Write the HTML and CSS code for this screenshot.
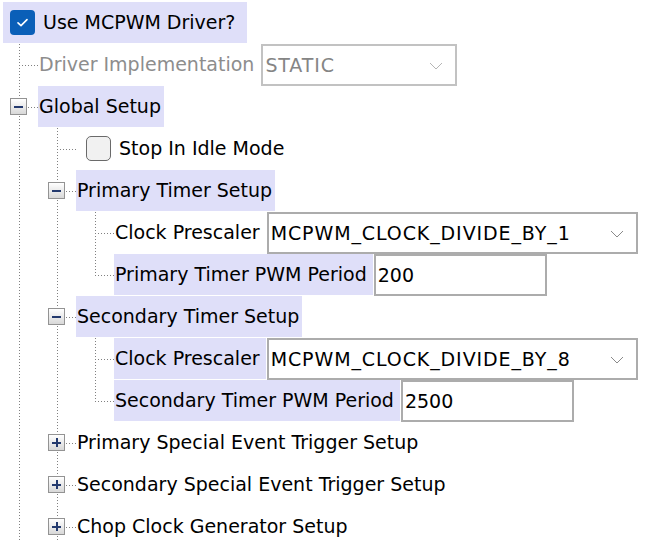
FILE: index.html
```html
<!DOCTYPE html>
<html>
<head>
<meta charset="utf-8">
<link rel="stylesheet" href="styles.css">
</head>
<body>
<div class="tree">
  <div class="row">
    <span class="lbl root sel"><span class="cb on"><svg viewBox="0 0 25 25" width="25" height="25"><polyline points="8,12.8 11,15.6 17,9.6" fill="none" stroke="#fff" stroke-width="1.6" stroke-linecap="round" stroke-linejoin="round"/></svg></span>Use MCPWM Driver?</span>
  </div>
  <div class="row">
    <span class="g tee"></span>
    <span class="lbl dis ctl">Driver Implementation</span>
    <span class="combo dis w-static"><span class="val">STATIC</span><svg class="chev" viewBox="0 0 14 8" width="14" height="8"><polyline points="1,1 7,7 13,1" fill="none" stroke="#b5b5b5" stroke-width="1"/></svg></span>
  </div>
  <div class="row">
    <span class="g tee"><span class="exp minus"></span></span>
    <span class="lbl sel">Global Setup</span>
  </div>
  <div class="row">
    <span class="g pipe"></span>
    <span class="g tee"></span>
    <span class="cb off"></span>
    <span class="lbl">Stop In Idle Mode</span>
  </div>
  <div class="row">
    <span class="g pipe"></span>
    <span class="g tee"><span class="exp minus"></span></span>
    <span class="lbl sel">Primary Timer Setup</span>
  </div>
  <div class="row">
    <span class="g pipe"></span>
    <span class="g pipe"></span>
    <span class="g tee"></span>
    <span class="lbl ctl">Clock Prescaler</span>
    <span class="combo w-clock"><span class="val">MCPWM_CLOCK_DIVIDE_BY_1</span><svg class="chev" viewBox="0 0 14 8" width="14" height="8"><polyline points="1,1 7,7 13,1" fill="none" stroke="#8a8a8a" stroke-width="1"/></svg></span>
  </div>
  <div class="row">
    <span class="g pipe"></span>
    <span class="g pipe"></span>
    <span class="g ell"></span>
    <span class="lbl ctl sel">Primary Timer PWM Period</span>
    <span class="field"><span class="val">200</span></span>
  </div>
  <div class="row">
    <span class="g pipe"></span>
    <span class="g tee"><span class="exp minus"></span></span>
    <span class="lbl sel">Secondary Timer Setup</span>
  </div>
  <div class="row">
    <span class="g pipe"></span>
    <span class="g pipe"></span>
    <span class="g tee"></span>
    <span class="lbl ctl sel">Clock Prescaler</span>
    <span class="combo w-clock"><span class="val">MCPWM_CLOCK_DIVIDE_BY_8</span><svg class="chev" viewBox="0 0 14 8" width="14" height="8"><polyline points="1,1 7,7 13,1" fill="none" stroke="#8a8a8a" stroke-width="1"/></svg></span>
  </div>
  <div class="row">
    <span class="g pipe"></span>
    <span class="g pipe"></span>
    <span class="g ell"></span>
    <span class="lbl ctl sel">Secondary Timer PWM Period</span>
    <span class="field"><span class="val">2500</span></span>
  </div>
  <div class="row">
    <span class="g pipe"></span>
    <span class="g tee"><span class="exp plus"></span></span>
    <span class="lbl">Primary Special Event Trigger Setup</span>
  </div>
  <div class="row">
    <span class="g pipe"></span>
    <span class="g tee"><span class="exp plus"></span></span>
    <span class="lbl">Secondary Special Event Trigger Setup</span>
  </div>
  <div class="row">
    <span class="g pipe"></span>
    <span class="g tee"><span class="exp plus"></span></span>
    <span class="lbl">Chop Clock Generator Setup</span>
  </div>
</div>
</body>
</html>
```

FILE: styles.css
```css
html, body {
  margin: 0;
  padding: 0;
  background: #ffffff;
  overflow: hidden;
}

body {
  font-family: "DejaVu Sans", "Liberation Sans", sans-serif;
  font-size: 19px;
  color: #000000;
  width: 650px;
  height: 542px;
}

.tree {
  padding-top: 2px;
  display: flex;
  flex-direction: column;
}

.row {
  height: 42px;
  display: flex;
  align-items: flex-start;
  white-space: nowrap;
}

/* tree guide cells */
.g {
  --v: repeating-linear-gradient(to bottom, #808080 0 1px, transparent 1px 3px);
  --h: repeating-linear-gradient(to right, #808080 0 1px, transparent 1px 3px);
  flex: 0 0 38px;
  height: 42px;
  display: flex;
  align-items: center;
}

.g.pipe {
  background: var(--v) 19px 0 / 1px 100% no-repeat;
}

.g.tee {
  background:
    var(--h) 19px 21px / 19px 1px no-repeat,
    var(--v) 19px 0 / 1px 100% no-repeat;
}

.g.ell {
  background:
    var(--h) 19px 21px / 19px 1px no-repeat,
    var(--v) 19px 0 / 1px 22px no-repeat;
}

/* expander boxes */
.exp {
  box-sizing: border-box;
  width: 17px;
  height: 17px;
  margin-left: 10px;
  margin-top: -1px;
  border: 1px solid #939393;
  background: linear-gradient(#ffffff, #d8d8d8);
  display: flex;
  align-items: center;
  justify-content: center;
  position: relative;
}

.exp::before {
  content: "";
  width: 9px;
  height: 2px;
  background: #243a6e;
}

.exp.plus::after {
  content: "";
  position: absolute;
  width: 2px;
  height: 9px;
  left: 6.5px;
  top: 3px;
  background: #243a6e;
}

/* labels */
.lbl {
  height: 41px;
  line-height: 41px;
  padding: 0 3px 0 1px;
}

.lbl.ctl {
  padding-right: 6px;
}

.lbl.sel {
  background: #dfdff9;
}

.lbl.dis {
  color: #8d8d8d;
}

.lbl.root {
  display: flex;
  align-items: center;
  margin-left: 3px;
  padding: 0 12px 0 7px;
  gap: 8px;
}

/* checkboxes */
.cb {
  box-sizing: border-box;
  width: 25px;
  height: 25px;
  border-radius: 4px;
  flex: 0 0 25px;
}

.cb.on {
  background: #0a5fb8;
  display: block;
}

.cb.on svg {
  display: block;
}

.cb.off {
  margin: 8px 7px 0 10px;
  border: 1.5px solid #6a6a6a;
  background: #f1f1f1;
  border-radius: 5px;
}

/* inputs */
.combo, .field {
  box-sizing: border-box;
  height: 42px;
  margin-left: 1px;
  border: 2px solid #acacac;
  background: #ffffff;
  display: flex;
  align-items: center;
  justify-content: space-between;
}

.combo .val, .field .val {
  line-height: 38px;
  padding-left: 2px;
}

.combo .val {
  letter-spacing: 0.9px;
}

.combo .chev {
  margin-right: 12px;
  margin-top: 2px;
}

.combo.dis {
  border-color: #c2c2c2;
  color: #858585;
}

.w-static { width: 196px; }
.w-clock { width: 371px; }
.field { width: 173px; }
```
